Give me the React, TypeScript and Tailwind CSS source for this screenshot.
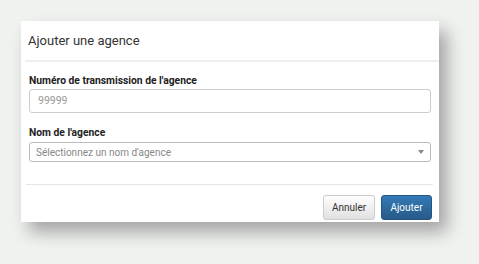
export default function App() {
  return (
    <div className="w-[479px] h-[264px] bg-[#f0f2f0] pt-[21px] pl-[21px] overflow-hidden" style={{ fontFamily: 'Roboto, "Liberation Sans", sans-serif' }}>
      <div className="w-[418px] h-[201px] bg-white shadow-[8px_10px_16px_rgba(0,0,0,0.32)] flex flex-col">
        <div className="h-[39px] flex items-center pl-[7px] text-[13px] text-[#333]">Ajouter une agence</div>
        <div className="ml-[4px] h-[2px] bg-[#eeeeee]"></div>
        <div className="px-[8px] pt-[12px] h-[122px]">
          <div className="text-[10.3px] font-bold text-[#222] leading-[14px]">Numéro de transmission de l'agence</div>
          <div className="mt-[1px] h-[24px] border border-[#ccc] rounded-[3px] flex items-center pl-[8px] text-[10.5px] text-[#999] w-[402px]">99999</div>
          <div className="mt-[13px] text-[10.3px] font-bold text-[#222] leading-[14px]">Nom de l'agence</div>
          <div className="mt-[2px] h-[20px] border border-[#bbb] rounded-[3px] flex items-center pl-[6px] pr-[6px] text-[10px] text-[#888] w-[402px]">
            <span className="flex-1">Sélectionnez un nom d'agence</span>
            <span className="w-0 h-0 border-l-[3px] border-r-[3px] border-t-[4px] border-l-transparent border-r-transparent border-t-[#888]"></span>
          </div>
        </div>
        <div className="ml-[5px] mr-[6px] h-[1px] bg-[#e5e5e5]"></div>
        <div className="flex justify-end gap-[6px] pr-[7px] pt-[10px]">
          <button className="w-[52px] h-[25px] rounded-[3px] border border-[#ccc] bg-gradient-to-b from-white to-[#e0e0e0] text-[10px] text-[#333]">Annuler</button>
          <button className="w-[51px] h-[25px] rounded-[3px] border border-[#245580] bg-gradient-to-b from-[#337ab7] to-[#265a88] text-[10px] text-white">Ajouter</button>
        </div>
      </div>
    </div>
  );
}
